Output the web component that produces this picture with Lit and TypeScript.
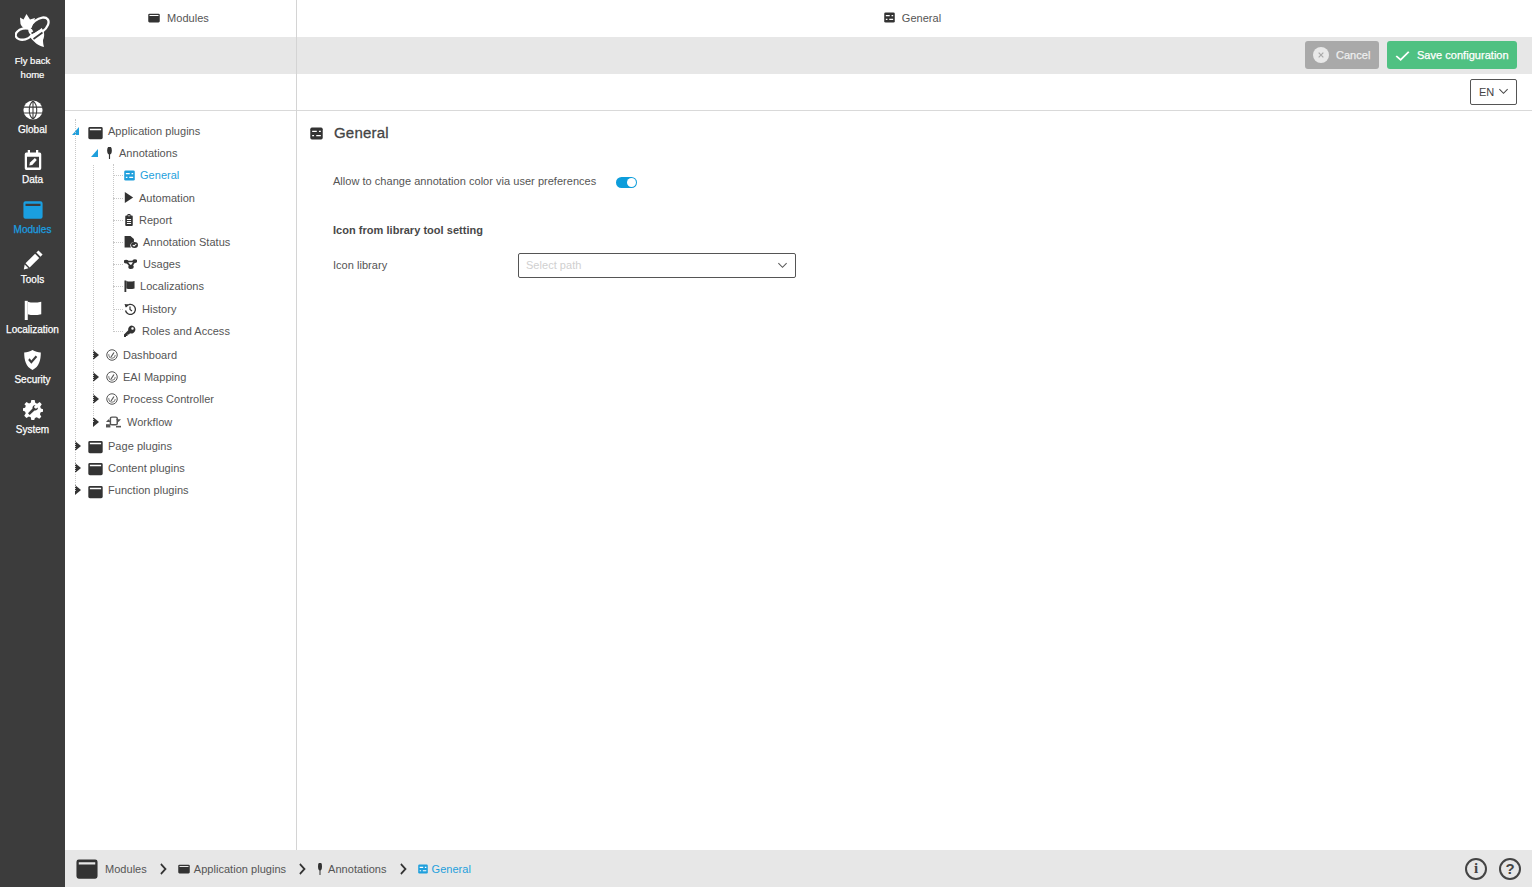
import { LitElement, html, css, svg } from "lit";
import { customElement } from "lit/decorators.js";

const ic: Record<string, any> = {
  window: svg`<path fill-rule="evenodd" d="M3 1.500h18a2.500 2.500 0 0 1 2.500 2.500v16a2.500 2.500 0 0 1-2.500 2.500H3A2.500 2.500 0 0 1 .5 20V4A2.500 2.500 0 0 1 3 1.500zM3 4.500v2.600h18V4.500z"/>`,
  general: svg`<rect x=".5" y="1" width="23" height="22" rx="3"/><path d="M4 8h16M4 16h16" stroke="#fff" stroke-width="2.600"/><rect x="12.500" y="5" width="4" height="6"/><rect x="7.500" y="13" width="4" height="6"/>`,
  pin: svg`<circle cx="12" cy="7" r="8"/><rect x="10" y="12" width="4" height="12" rx="1.200"/>`,
  play: svg`<path d="M2 0l20 12L2 24z"/>`,
  report: svg`<path fill-rule="evenodd" d="M8 3a4 4 0 0 1 8 0h3a2 2 0 0 1 2 2v17a2 2 0 0 1-2 2H5a2 2 0 0 1-2-2V5a2 2 0 0 1 2-2zm4-1.200A1.500 1.500 0 1 0 12 4.800 1.500 1.500 0 0 0 12 1.800zM7 10v2h10v-2zm0 4v2h10v-2zm0 4v2h10v-2z"/>`,
  status: svg`<path d="M1 0h10l6 6v6a7 7 0 0 0-5 11H1z"/><circle cx="18" cy="18" r="6"/><path d="M15 18l2.200 2 3.800-4" fill="none" stroke="#fff" stroke-width="1.800"/>`,
  usages: svg`<circle cx="4" cy="6" r="4.500"/><circle cx="20" cy="5" r="4.500"/><circle cx="13" cy="19" r="5"/><path d="M4 6h16M4 6l9 13M20 5l-7 14" stroke="currentColor" stroke-width="3.500" fill="none"/>`,
  flag: svg`<path d="M1 1h4v23H1z"/><path d="M5 2c5 1.500 11 1.500 18 0v15c-7 1.500-13 1.500-18 0z"/>`,
  history: svg`<path d="M4 8a10 10 0 1 1-1 7" fill="none" stroke="currentColor" stroke-width="2.600"/><path d="M1 2l8 1-5.500 6z"/><path d="M12 7v6l4 3" fill="none" stroke="currentColor" stroke-width="2.400"/>`,
  key: svg`<path fill-rule="evenodd" d="M15 1a8 8 0 1 1-3 15.500L10 19H7v3H4v2H0v-5l8.500-8.500A8 8 0 0 1 15 1zm2 3.500a2.500 2.500 0 1 0 0 5 2.500 2.500 0 0 0 0-5z"/>`,
  gauge: svg`<circle cx="12" cy="12" r="10.500" fill="none" stroke="currentColor" stroke-width="2"/><circle cx="12" cy="12" r="6.500" fill="none" stroke="currentColor" stroke-width="1.600" stroke-dasharray="22 20"/><path d="M10 16L16 7" stroke="currentColor" stroke-width="2.400"/>`,
  workflow: svg`<rect x="7" y="4" width="11" height="14" rx="2.500" fill="none" stroke="currentColor" stroke-width="2.400"/><path d="M0 13l4-5 4 5zM16 8l4 5 4-5z"/><rect x="0" y="17" width="7" height="6"/><rect x="16" y="20" width="8" height="3"/>`,
  globe: svg`<circle cx="12" cy="12" r="11.500"/><path d="M1 8.500h22M1 15.500h22M12 1v22M12 1C6 6 6 18 12 23M12 1c6 5 6 17 0 22" fill="none" stroke="#3c3c3c" stroke-width="1.300"/>`,
  data: svg`<path fill-rule="evenodd" d="M5 0h3v3h8V0h3v3h2a2 2 0 0 1 2 2v17a2 2 0 0 1-2 2H3a2 2 0 0 1-2-2V5a2 2 0 0 1 2-2h2zM4 8v13h16V8z"/><path d="M7 18.500l1-3.500 6.500-5.500 2.500 2.500-6 6z"/>`,
  pencil: svg`<path d="M18.500 .5l5 5-2.500 2.500-5-5z"/><path d="M14.500 4.500l5 5L8 21l-5-5z"/><path d="M2 17.500L6.500 22l-5.500 1.500z"/>`,
  shield: svg`<path fill-rule="evenodd" d="M12 0c3 2 7 3 10.500 3 0 9-2 17-10.500 21C3.500 20 1.500 12 1.500 3 5 3 9 2 12 0zM6.500 12l4 4.500 7.500-8-2-2-5.500 6-2-2.500z"/>`,
  gear: svg`<path fill-rule="evenodd" d="M10 0h4l.700 3.400 2.300 1L20 2.500 22.500 5 20.600 8l.900 2.200L24 11v3l-2.800.700-.900 2.300 1.700 3-2.500 2.500-3-1.800-2.200.900L13.500 24h-3.500l-.700-3.200-2.200-.900-3 1.800L1.500 19l1.800-3-.900-2.200L0 13v-3l2.500-.700.900-2.300L1.700 5 4.200 2.500l3 1.800 2.100-.900zM15 6c-2.500 0-4 2-3.600 4.200L6 16l2 2 5.800-5.400C16 13 18 11.500 18 9l-2.500 1.500-2-1.200V7.500z"/>`,
  cancel: svg`<circle cx="12" cy="12" r="12" fill="#e9e9e9"/><path d="M8.500 8.500l7 7M15.500 8.500l-7 7" stroke="#a9a9a9" stroke-width="1.800"/>`,
  check: svg`<path d="M2 13l7 7L22 5" fill="none" stroke="currentColor" stroke-width="3"/>`,
  chevron: svg`<path d="M3 7l9 9 9-9" fill="none" stroke="currentColor" stroke-width="2.200"/>`,
  crumb: svg`<path d="M5 2l12 10L5 22" fill="none" stroke="currentColor" stroke-width="4.500"/>`,
  bee: svg`<g transform="translate(-15 -14)">
      <g fill="none" stroke="#fff" stroke-width="2.300" stroke-linejoin="round">
        <ellipse cx="39" cy="26" rx="11" ry="6.500" transform="rotate(-38 39 26)"/>
        <ellipse cx="24" cy="34" rx="8.500" ry="5.500" transform="rotate(-14 24 34)"/>
      </g>
      <path fill="#fff" d="M20 17.500l3.500 2 3-5.500 3.500 5.500 5-1.500-1.500 5 -2 5-4 1c-3 0-6-2-7-5z"/>
      <path fill="#fff" d="M29.500 36l12-8c3 3 3.500 8 1.500 12 0 3 .5 5 1 7-5-1-11-5-14.500-11z"/>
      <path d="M31.500 33.500l9-5.500M33.500 39l9-6.500" stroke="#3c3c3c" stroke-width="1.700" fill="none"/>
    </g>`,
};

const icon = (name: string, w: number, h: number, cls = "") =>
  html`<svg class="ico ${cls}" style="width:${w}px;height:${h}px" viewBox="0 0 ${name === "bee" ? "35 33" : "24 24"}" preserveAspectRatio="none" fill="currentColor">${ic[name]}</svg>`;

interface Node { t: string; i: string; w: number; h: number; m: number; on?: boolean; }

const leaves: Node[] = [
  { t: "General", i: "general", w: 11, h: 11, m: 5, on: true },
  { t: "Automation", i: "play", w: 10, h: 11, m: 5 },
  { t: "Report", i: "report", w: 10, h: 12, m: 5 },
  { t: "Annotation Status", i: "status", w: 14, h: 12, m: 5 },
  { t: "Usages", i: "usages", w: 13, h: 10, m: 6 },
  { t: "Localizations", i: "flag", w: 11, h: 12, m: 5 },
  { t: "History", i: "history", w: 12, h: 12, m: 6 },
  { t: "Roles and Access", i: "key", w: 12, h: 12, m: 6 },
];

const modules: Node[] = [
  { t: "Dashboard", i: "gauge", w: 12, h: 12, m: 5 },
  { t: "EAI Mapping", i: "gauge", w: 12, h: 12, m: 5 },
  { t: "Process Controller", i: "gauge", w: 12, h: 12, m: 5 },
  { t: "Workflow", i: "workflow", w: 15, h: 13, m: 6 },
];

const nav = [
  { t: "Global", i: "globe", w: 20, h: 20 },
  { t: "Data", i: "data", w: 18, h: 20 },
  { t: "Modules", i: "window", w: 20, h: 20, on: true },
  { t: "Tools", i: "pencil", w: 20, h: 20 },
  { t: "Localization", i: "flag", w: 18, h: 20 },
  { t: "Security", i: "shield", w: 19, h: 20 },
  { t: "System", i: "gear", w: 20, h: 20 },
];

@customElement("app-root")
export class AppRoot extends LitElement {
  static styles = css`
    :host { display: block; height: 887px; width: 1532px; overflow: hidden; font-family: "Liberation Sans", Arial, sans-serif; font-size: 11px; letter-spacing: .03px; color: #555; background: #fff; }
    .app { display: flex; height: 100%; }
    .ico { display: block; flex: none; }

    .side { width: 65px; flex: none; background: #3c3c3c; color: #fff; display: flex; flex-direction: column; align-items: stretch; }
    .home { height: 94px; display: flex; flex-direction: column; align-items: center; padding-top: 14px; box-sizing: border-box; }
    .home .lab { margin-top: 7px; line-height: 14px; font-size: 9.500px; letter-spacing: 0; -webkit-text-stroke: .2px #fff; text-align: center; }
    .nav { height: 50px; padding-top: 6px; box-sizing: border-box; display: flex; flex-direction: column; align-items: center; }
    .nav .lab { margin-top: 3px; line-height: 14px; font-size: 10px; letter-spacing: 0; -webkit-text-stroke: .25px currentColor; white-space: nowrap; }
    .nav.on { color: #1a9fe0; }

    .right { flex: 1; display: flex; flex-direction: column; min-width: 0; }
    .panes { flex: 1; display: flex; min-height: 0; }
    .left { width: 231px; flex: none; border-right: 1px solid #d4d4d4; display: flex; flex-direction: column; }
    .main { flex: 1; display: flex; flex-direction: column; min-width: 0; }
    .head { height: 37px; flex: none; display: flex; align-items: center; justify-content: center; gap: 7px; padding: 0 4px 2px 0; box-sizing: border-box; color: #555; }
    .head .ico { color: #333; }
    .bar { height: 37px; flex: none; background: #e7e7e7; display: flex; align-items: center; justify-content: flex-end; gap: 8px; padding-right: 15px; }
    .sub { height: 37px; flex: none; box-sizing: border-box; border-bottom: 1px solid #d9d9d9; display: flex; align-items: center; justify-content: flex-end; padding-right: 15px; }
    .btn { height: 28px; border-radius: 3px; display: flex; align-items: center; color: #fff; -webkit-text-stroke: .25px currentColor; margin-top: -1px; box-sizing: border-box; }
    .cancel { width: 74px; background: #a9a9a9; padding-left: 8px; gap: 7px; color: #eee; }
    .save { width: 130px; background: #4fc182; padding-left: 8px; gap: 7px; }
    .lang { width: 47px; height: 26px; box-sizing: border-box; border: 1px solid #555; border-radius: 2px; display: flex; align-items: center; padding-left: 8px; gap: 4px; color: #444; margin-top: -1px; }

    .tree { position: relative; padding-top: 9px; }
    .row { height: 22.200px; display: flex; align-items: center; white-space: nowrap; }
    .arrow { height: 10px; flex: none; }
    .arrow.open { width: 7px; height: 8px; }
    .arrow.closed { width: 6px; }
    .l0 { padding-left: 7px; }
    .l0 .arrow.open { margin-right: 9px; }
    .l0 .arrow.closed { margin-left: 3px; margin-right: 7px; }
    .l0 .ico { margin-right: 5px; margin-top: 3px; color: #333; }
    .l1 { padding-left: 26px; }
    .l1 .arrow.open { margin-right: 8px; }
    .l1 .arrow.closed { margin-left: 2px; margin-right: 7px; }
    .l2 { padding-left: 59px; position: relative; }
    .l2::before { content: ""; position: absolute; left: 48px; width: 10px; top: 50%; border-top: 1px dotted #c8c8c8; }
    .row .ico { color: #333; }
    .row .ico.gauge { color: #555; }
    .row.on, .row.on .ico { color: #1f9fdc; }
    .gap-a { margin-top: 2px; }
    .gap-b { margin-top: 2px; }
    .open { color: #1f9fdc; }
    .closed { color: #333; }
    .guide { position: absolute; border-left: 1px dotted #c8c8c8; }
    .g0 { left: 10px; top: 8px; height: 372px; }
    .g1 { left: 28px; top: 54px; height: 257px; }
    .g2 { left: 48px; top: 53px; height: 168px; }

    .content { padding: 11px 0 0 13px; }
    .title { display: flex; align-items: center; gap: 11px; height: 22px; font-size: 15px; letter-spacing: .2px; -webkit-text-stroke: .3px #444; color: #444; }
    .title span { padding-bottom: 2px; }
    .title .ico { color: #333; }
    .field { display: flex; align-items: center; padding-left: 23px; }
    .field > span, .field > label, .select span { padding-bottom: 2px; }
    .tog-row { margin-top: 27px; height: 22px; gap: 20px; }
    .toggle { width: 21px; height: 11px; background: #0d9ddb; border-radius: 6px; display: flex; align-items: center; justify-content: flex-end; padding-right: 1px; box-sizing: border-box; }
    .toggle i { width: 9px; height: 9px; border-radius: 50%; background: #fff; display: block; }
    .sec { padding-left: 23px; margin-top: 29px; font-weight: 700; line-height: 16px; color: #484848; }
    .lib { margin-top: 15px; height: 25px; }
    .lib label { width: 185px; }
    .select { width: 278px; height: 25px; box-sizing: border-box; border: 1px solid #555; border-radius: 2px; display: flex; align-items: center; justify-content: space-between; padding: 0 7px; color: #d0d0d0; }
    .select .ico { color: #555; }

    .foot { height: 37px; flex: none; background: #e7e7e7; display: flex; align-items: center; padding-left: 11px; color: #555; }
    .foot .ico { color: #333; }
    .crumb { display: flex; align-items: center; white-space: nowrap; }
    .foot .sep { margin: 0 10px 0 12px; color: #444; }
    .foot .blue, .foot .blue .ico { color: #1f9fdc; }
    .help { margin-left: auto; display: flex; gap: 12px; padding-right: 11px; }
    .circ { width: 22px; height: 22px; box-sizing: border-box; border: 2px solid #444; border-radius: 50%; display: flex; align-items: center; justify-content: center; font: 700 15px "Liberation Serif", serif; color: #444; }
    .circ.q { font: 700 15px "Liberation Sans", sans-serif; }
  `;

  private arrow(open: boolean) {
    return open
      ? html`<svg class="arrow open" viewBox="0 0 7 8" fill="currentColor"><path d="M7 0v8H0z"/></svg>`
      : html`<svg class="arrow closed" viewBox="0 0 6 10" fill="currentColor"><path d="M0 0l6 5-6 5z"/></svg>`;
  }

  render() {
    return html`<div class="app">
      <aside class="side">
        <div class="home">
          ${icon("bee", 35, 33)}
          <div class="lab">Fly back<br />home</div>
        </div>
        ${nav.map((n) => html`<div class="nav ${n.on ? "on" : ""}">${icon(n.i, n.w, n.h)}<div class="lab">${n.t}</div></div>`)}
      </aside>
      <div class="right">
        <div class="panes">
          <section class="left">
            <div class="head">${icon("window", 12, 10)}<span>Modules</span></div>
            <div class="bar"></div>
            <div class="sub"></div>
            <div class="tree">
              <div class="guide g0"></div>
              <div class="guide g1"></div>
              <div class="guide g2"></div>
              <div class="row l0">${this.arrow(true)}${icon("window", 15, 14)}<span>Application plugins</span></div>
              <div class="row l1">${this.arrow(true)}${icon("pin", 7, 12)}<span style="margin-left:6px">Annotations</span></div>
              ${leaves.map((n) => html`<div class="row l2 ${n.on ? "on" : ""}">${icon(n.i, n.w, n.h)}<span style="margin-left:${n.m}px">${n.t}</span></div>`)}
              <div class="gap-a"></div>
              ${modules.map((n) => html`<div class="row l1">${this.arrow(false)}${icon(n.i, n.w, n.h, "gauge")}<span style="margin-left:${n.m}px">${n.t}</span></div>`)}
              <div class="gap-b"></div>
              ${["Page plugins", "Content plugins", "Function plugins"].map((t) => html`<div class="row l0">${this.arrow(false)}${icon("window", 15, 14)}<span>${t}</span></div>`)}
            </div>
          </section>
          <section class="main">
            <div class="head">${icon("general", 11, 11)}<span>General</span></div>
            <div class="bar">
              <div class="btn cancel">${icon("cancel", 16, 16)}<span>Cancel</span></div>
              <div class="btn save">${icon("check", 15, 13)}<span>Save configuration</span></div>
            </div>
            <div class="sub"><div class="lang"><span>EN</span>${icon("chevron", 11, 11)}</div></div>
            <div class="content">
              <div class="title">${icon("general", 13, 13)}<span>General</span></div>
              <div class="field tog-row"><span>Allow to change annotation color via user preferences</span><div class="toggle"><i></i></div></div>
              <div class="sec">Icon from library tool setting</div>
              <div class="field lib"><label>Icon library</label><div class="select"><span>Select path</span>${icon("chevron", 11, 11)}</div></div>
            </div>
          </section>
        </div>
        <footer class="foot">
          <div class="crumb">${icon("window", 22, 22)}<span style="margin-left:7px">Modules</span></div>
          <div class="sep">${icon("crumb", 9, 12)}</div>
          <div class="crumb">${icon("window", 12, 10)}<span style="margin-left:4px">Application plugins</span></div>
          <div class="sep">${icon("crumb", 9, 12)}</div>
          <div class="crumb">${icon("pin", 6, 12)}<span style="margin-left:5px">Annotations</span></div>
          <div class="sep">${icon("crumb", 9, 12)}</div>
          <div class="crumb blue">${icon("general", 10, 10)}<span style="margin-left:4px">General</span></div>
          <div class="help"><div class="circ">i</div><div class="circ q">?</div></div>
        </footer>
      </div>
    </div>`;
  }
}
